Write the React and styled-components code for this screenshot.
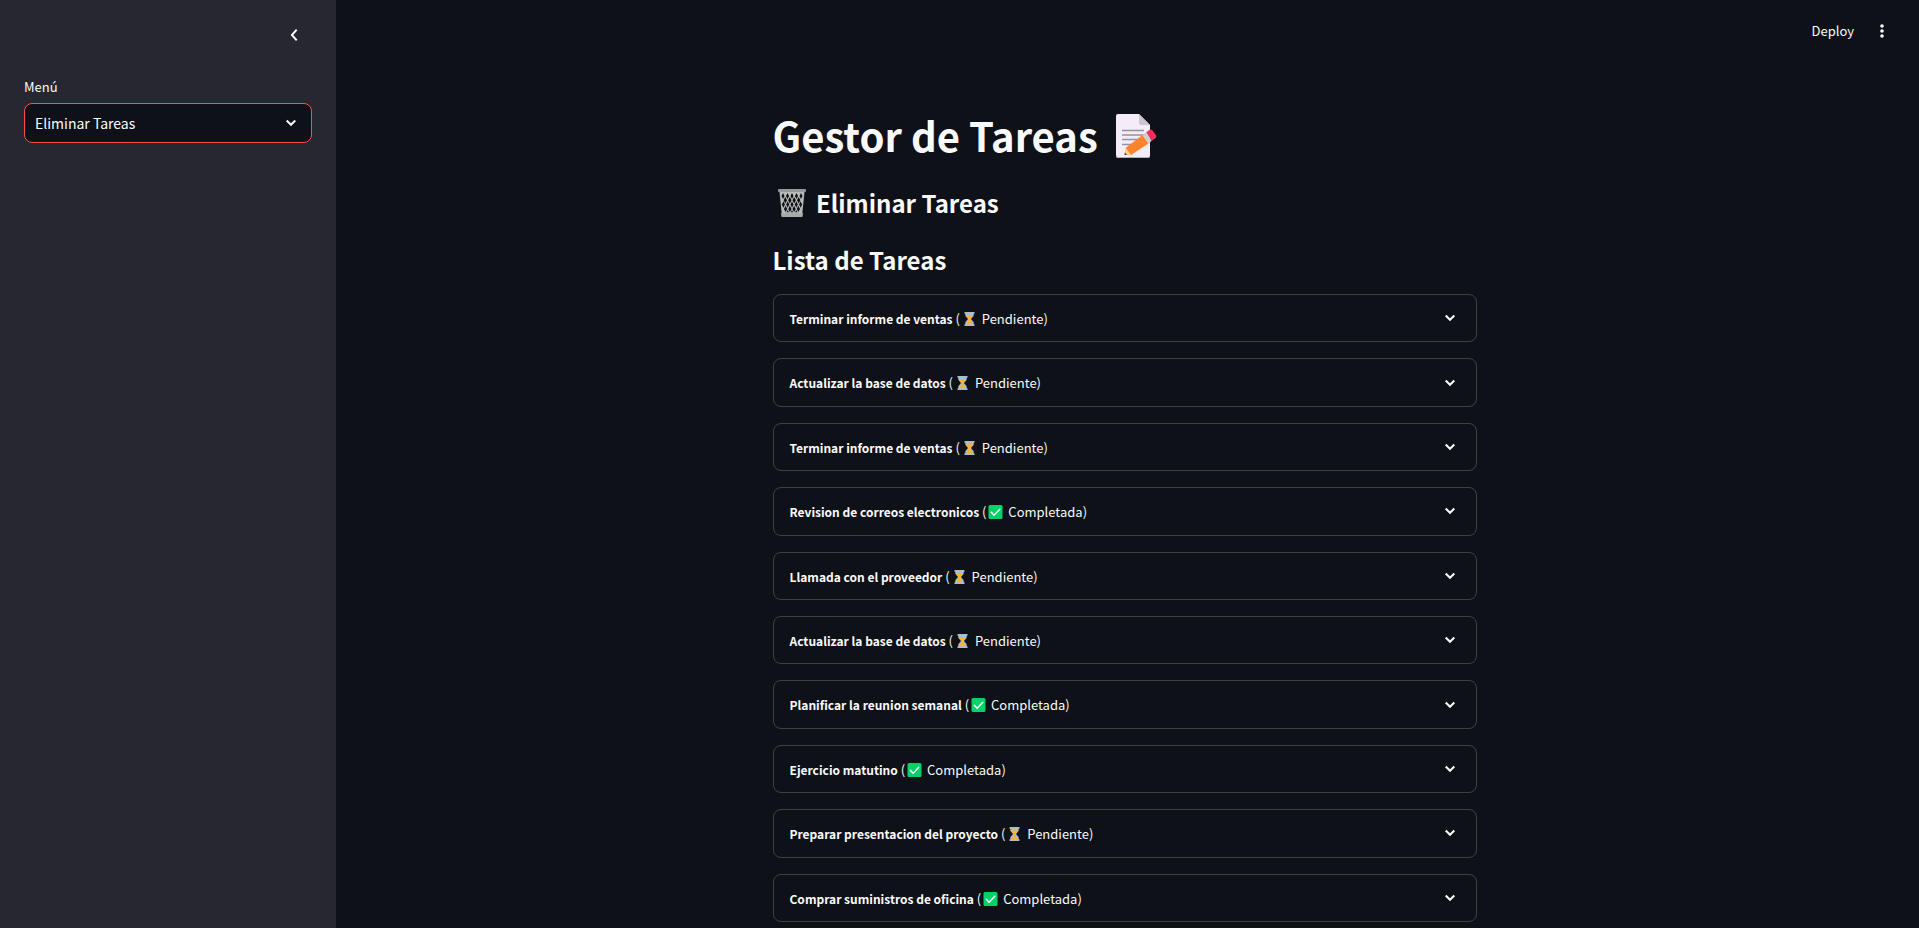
import React, { useState } from "react";
import styled, { createGlobalStyle } from "styled-components";

const GlobalStyle = createGlobalStyle`
  *, *::before, *::after { box-sizing: border-box; }
  body {
    margin: 0;
    background: #0e1117;
    color: #fafafa;
    font-family: "Source Sans Pro", "Noto Sans CJK JP", "Noto Sans", sans-serif;
    font-size: 14px;
    line-height: 1.6;
  }
  h1, h2, p { margin: 0; }
`;

const Shell = styled.div`
  display: flex;
  min-height: 100vh;
`;

const Sidebar = styled.aside`
  flex: 0 0 336px;
  background: #262730;
  padding: 19px 24px;
`;

const SidebarTop = styled.div`
  display: flex;
  justify-content: flex-end;
  margin-bottom: 26px;
  padding-right: 2px;
`;

const IconButton = styled.button`
  display: inline-flex;
  align-items: center;
  justify-content: center;
  width: ${(p) => p.$size}px;
  height: ${(p) => p.$size}px;
  padding: 0;
  border: 0;
  border-radius: 8px;
  background: transparent;
  color: inherit;
  cursor: pointer;
`;

const FieldLabel = styled.label`
  display: block;
  margin-bottom: 6px;
  font-size: 13px;
  line-height: 20px;
`;

const SelectBox = styled.div`
  position: relative;
`;

const Select = styled.select`
  display: block;
  width: 100%;
  height: 40px;
  padding: 0 40px 0 10px;
  appearance: none;
  border: 1px solid #ff4b4b;
  border-radius: 8px;
  outline: none;
  background: #0e1117;
  color: #fafafa;
  font-family: inherit;
  font-size: 14px;
`;

const SelectArrow = styled.span`
  position: absolute;
  top: 0;
  right: 15px;
  height: 100%;
  display: flex;
  align-items: center;
  pointer-events: none;
`;

const Main = styled.main`
  flex: 1;
  min-width: 0;
  padding-right: 6px;
`;

const Toolbar = styled.header`
  display: flex;
  justify-content: flex-end;
  align-items: center;
  gap: 16px;
  height: 62px;
  padding-right: 19px;
`;

const DeployButton = styled.button`
  padding: 4px 0;
  border: 0;
  background: transparent;
  color: inherit;
  font-family: inherit;
  font-size: 13px;
  line-height: 20px;
  cursor: pointer;
`;

const Content = styled.div`
  max-width: 736px;
  margin: 0 auto;
  padding: 47px 16px 0;
`;

const Title = styled.h1`
  font-size: 40px;
  font-weight: 700;
  line-height: 53px;
`;

const Subtitle = styled.h2`
  margin-top: 24px;
  font-size: 24px;
  font-weight: 700;
  line-height: 33px;
`;

const TaskList = styled.div`
  display: flex;
  flex-direction: column;
  gap: 16px;
  margin-top: 18px;
`;

const Task = styled.details`
  border: 1px solid rgba(250, 250, 250, 0.2);
  border-radius: 8px;
`;

const TaskSummary = styled.summary`
  display: flex;
  align-items: center;
  justify-content: space-between;
  padding: 12px 20px 12px 16px;
  list-style: none;
  cursor: pointer;
`;

const TaskLabel = styled.span`
  small { font-size: 13px; line-height: 1; }
  strong { font-size: 12px; font-weight: 700; }
`;

const Emoji = styled.svg`
  vertical-align: ${(p) => p.$drop}px;
`;

const ChevronDown = () => (
  <svg width="12" height="8" viewBox="0 0 12 8" fill="none" stroke="currentColor" strokeWidth="2" aria-hidden="true">
    <path d="M1.7 1.5 6 5.8 10.3 1.5" />
  </svg>
);

const ChevronLeft = () => (
  <svg width="8" height="14" viewBox="0 0 8 14" fill="none" stroke="currentColor" strokeWidth="2" aria-hidden="true">
    <path d="M6.7 1.7 1.9 7l4.8 5.3" />
  </svg>
);

const Dots = () => (
  <svg width="4" height="14" viewBox="0 0 4 14" fill="currentColor" aria-hidden="true">
    <circle cx="2" cy="2" r="1.8" />
    <circle cx="2" cy="7" r="1.8" />
    <circle cx="2" cy="12" r="1.8" />
  </svg>
);

const MemoIcon = () => (
  <Emoji $drop={-6} width="60" height="44" viewBox="0 0 60 44" aria-hidden="true">
    <path d="M11 0h21l11 11v31a2 2 0 0 1-2 2H11a2 2 0 0 1-2-2V2a2 2 0 0 1 2-2z" fill="#f3edf8" />
    <path d="M9.5 41.5v.5A1.5 1.5 0 0 0 11 43.500h30a1.500 1.500 0 0 0 1.500-1.500" fill="none" stroke="#b9a9c3" />
    <path d="M32 0l11 11h-9a2 2 0 0 1-2-2z" fill="#cdc4d6" />
    <path d="M15 16.500h22M15 21h22M15 25.500h20M15 30.500h14" stroke="#998ea4" strokeWidth="1.700" />
    <path d="M35.500 21l6 8.500-17.500 11.500-5.500-7z" fill="#ff822d" />
    <path d="M18.500 34l-.9 6.500 2.200.7 4.200-.2z" fill="#ffce7c" />
    <path d="M17.900 38.500l2 2.600-2.300-.2z" fill="#402a32" />
    <path d="M35.500 21l3.800-2.800 5.400 8.600-3.200 2.700z" fill="#cfd0d2" />
    <path d="M39.300 18.200l3-2.200q1.800-1.200 3.200.6l3.400 4.500q1.200 1.800-.6 3.200l-3.600 2.500z" fill="#fa2c5c" />
  </Emoji>
);

const TrashIcon = () => (
  <Emoji $drop={-4} width="38" height="28" viewBox="0 0 38 28" aria-hidden="true">
    <path d="M6.500 3l2.300 22h20.400L31.500 3z" fill="#babbbb" />
    <g fill="#0e1117">
      {[10, 14.5, 19, 23.5, 28].map((x) => (
        <path key={`a${x}`} d={`M${x} 4l1.500 3-1.500 3-1.500-3z`} />
      ))}
      {[12.300, 16.8, 21.2, 25.7].map((x) => (
        <path key={`b${x}`} d={`M${x} 8l1.700 3.300-1.700 3.300-1.700-3.300z`} />
      ))}
      {[10.400, 14.700, 19, 23.3, 27.6].map((x) => (
        <path key={`c${x}`} d={`M${x} 12.300l1.500 3.200-1.500 3.200-1.500-3.200z`} />
      ))}
      {[12.600, 16.9, 21.1, 25.4].map((x) => (
        <path key={`d${x}`} d={`M${x} 16.700l1.600 3.200-1.600 3.200-1.600-3.200z`} />
      ))}
      {[14.800, 19, 23.2].map((x) => (
        <path key={`e${x}`} d={`M${x} 21l1.200 2.300h-2.400z`} />
      ))}
    </g>
    <rect x="5" y="0" width="28" height="3" rx="1" fill="#999b9b" />
    <path d="M8 24h22l-.3 3.200q0 .8-1 .8H9.300q-1 0-1-.8z" fill="#a9aaaa" />
  </Emoji>
);

const HourglassIcon = () => (
  <Emoji $drop={-2} width="19" height="14" viewBox="0 0 19 14" role="img" aria-label="En espera">
    <path d="M5.300 1h8.400v2.800L11 7l2.700 3.200V13H5.300v-2.800L8 7 5.300 3.800z" fill="#8fc4ec" />
    <path d="M6 3.200h7v.8L10.500 7l.2 1.500H8.300L8.500 7 6 4z" fill="#ffb02e" />
    <path d="M8.700 7h1.600l.5 2.300 2.200 1.700v1.300H6V11l2.200-1.700z" fill="#ffb02e" />
    <path d="M4.500 0h10v1.700h-10zM4.500 12.300h10V14h-10z" fill="#b4bcc2" />
  </Emoji>
);

const CheckIcon = () => (
  <Emoji $drop={-2} width="19" height="14" viewBox="0 0 19 14" role="img" aria-label="Hecha">
    <rect x="2.500" width="14" height="14" rx="1.500" fill="#00d26a" />
    <path d="M5.300 7.300l2.800 2.900 5.700-6" fill="none" stroke="#fff" strokeWidth="1.500" strokeLinecap="round" strokeLinejoin="round" />
  </Emoji>
);

const TASKS = [
  ["Terminar informe de ventas", false],
  ["Actualizar la base de datos", false],
  ["Terminar informe de ventas", false],
  ["Revision de correos electronicos", true],
  ["Llamada con el proveedor", false],
  ["Actualizar la base de datos", false],
  ["Planificar la reunion semanal", true],
  ["Ejercicio matutino", true],
  ["Preparar presentacion del proyecto", false],
  ["Comprar suministros de oficina", true],
];

function TaskItem({ name, done }) {
  return (
    <Task>
      <TaskSummary>
        <TaskLabel>
          <small>
            <strong>{name}</strong> ({done ? <CheckIcon /> : <HourglassIcon />} {done ? "Completada" : "Pendiente"})
          </small>
        </TaskLabel>
        <ChevronDown />
      </TaskSummary>
    </Task>
  );
}

export default function App() {
  const [view, setView] = useState("Eliminar Tareas");
  return (
    <>
      <GlobalStyle />
      <Shell>
        <Sidebar>
          <SidebarTop>
            <IconButton $size={32} aria-label="Cerrar barra lateral">
              <ChevronLeft />
            </IconButton>
          </SidebarTop>
          <FieldLabel htmlFor="menu">Menú</FieldLabel>
          <SelectBox>
            <Select id="menu" value={view} onChange={(e) => setView(e.target.value)}>
              <option>Eliminar Tareas</option>
            </Select>
            <SelectArrow>
              <ChevronDown />
            </SelectArrow>
          </SelectBox>
        </Sidebar>
        <Main>
          <Toolbar>
            <DeployButton>Deploy</DeployButton>
            <IconButton $size={24} aria-label="Opciones">
              <Dots />
            </IconButton>
          </Toolbar>
          <Content>
            <Title>
              Gestor de Tareas <MemoIcon />
            </Title>
            <Subtitle>
              <TrashIcon /> {view}
            </Subtitle>
            <Subtitle>Lista de Tareas</Subtitle>
            <TaskList>
              {TASKS.map(([name, done], i) => (
                <TaskItem key={i} name={name} done={done} />
              ))}
            </TaskList>
          </Content>
        </Main>
      </Shell>
    </>
  );
}
